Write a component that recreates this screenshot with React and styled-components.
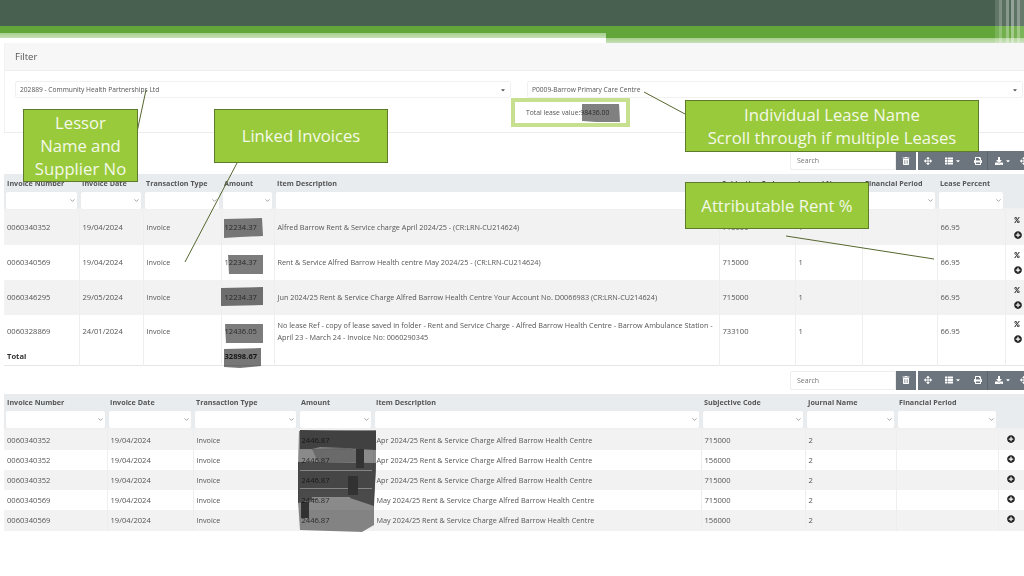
import React from 'react'
import styled, { createGlobalStyle } from 'styled-components'
import { ChevronDown } from 'lucide-react'
import { FaTrashAlt, FaArrowsAlt, FaThList, FaPrint, FaDownload, FaPlusCircle, FaPercent, FaCaretDown } from 'react-icons/fa'

const GlobalStyle = createGlobalStyle`
  html, body { margin: 0; padding: 0; background: #fff; }
  body { font-family: "Open Sans", "Liberation Sans", sans-serif; color: #555; }
`;

const Page = styled.div`
  position: relative;
  width: 1024px;
  height: 576px;
  overflow: hidden;
  background: #fff;
`;

const Banner = styled.div`
  position: relative;
  height: 43px;
`;

const DarkBand = styled.div`
  height: 26px;
  background: #47604f;
`;

const Ribbons = styled.div`
  display: flex;
  height: 17px;
`;

const Ribbon = styled.div`
  width: ${(props) => props.$width};
  background: linear-gradient(
    to bottom,
    #62a639 0,
    #62a639 ${(props) => props.$green}px,
    #a8cf8f ${(props) => props.$green}px,
    #c6dfb6 ${(props) => props.$green + 5}px,
    ${(props) => props.$after} ${(props) => props.$green + 5}px
  );
`;

const Stripes = styled.div`
  position: absolute;
  top: 0;
  right: 0;
  width: 31px;
  height: 43px;
  background: linear-gradient(
    to right,
    transparent 0 2px,
    rgba(255,255,255,.14) 2px 6px,
    rgba(255,255,255,.3) 6px 9px,
    rgba(255,255,255,.1) 9px 13px,
    rgba(255,255,255,.36) 13px 16px,
    rgba(255,255,255,.06) 16px 18px,
    rgba(255,255,255,.42) 18px 21px,
    rgba(255,255,255,.12) 21px 24px,
    rgba(255,255,255,.38) 24px 27px,
    rgba(255,255,255,.16) 27px 31px
  );
`;

const Card = styled.section`
  margin-left: 4px;
  height: 90px;
  box-sizing: border-box;
  border-bottom: 1px solid #ececec;
  border-left: 1px solid #f2f2f2;
`;

const CardHeader = styled.div`
  height: 28px;
  box-sizing: border-box;
  padding-left: 10px;
  display: flex;
  align-items: center;
  background: #f7f7f7;
  border-bottom: 1px solid #ededed;
  font-size: 9.5px;
  color: #555;
`;

const CardBody = styled.div`
  display: grid;
  grid-template-columns: 496px 496px;
  column-gap: 16px;
  padding: 10px 0 0 10px;
`;

const FilterColumn = styled.div`
  display: flex;
  flex-direction: column;
  align-items: flex-start;
`;

const SelectBox = styled.div`
  width: 100%;
  height: 17px;
  box-sizing: border-box;
  padding: 0 4px;
  display: flex;
  align-items: center;
  justify-content: space-between;
  border: 1px solid #f1f1f1;
  border-radius: 2px;
  font-size: 6.65px;
  color: #555;
  svg { color: #555; }
`;

const TotalBox = styled.div`
  margin-left: -16px;
  width: 119px;
  height: 29px;
  box-sizing: border-box;
  padding-left: 11px;
  display: flex;
  align-items: center;
  border: 4px solid #c6e08f;
  background: #fff;
  font-size: 6.8px;
  color: #555;
`;

const Toolbar = styled.div`
  display: flex;
  height: 19px;
  padding-left: 790px;
  margin: ${(props) => props.$top}px 0 4px;
`;

const SearchBox = styled.div`
  width: 106px;
  flex-shrink: 0;
  box-sizing: border-box;
  padding-left: 6px;
  display: flex;
  align-items: center;
  border: 1px solid #eeeeee;
  border-radius: 2px 0 0 2px;
  font-size: 7px;
  color: #777;
`;

const ClearButton = styled.div`
  width: 20px;
  flex-shrink: 0;
  display: flex;
  align-items: center;
  justify-content: center;
  background: #6c757d;
  color: #fff;
  font-size: 8px;
`;

const ButtonGroup = styled.div`
  margin-left: 2px;
  display: flex;
  align-items: center;
  flex-shrink: 0;
  background: #6c757d;
  color: #fff;
  font-size: 8px;
`;

const ToolButton = styled.div`
  width: ${(props) => props.$width}px;
  height: 100%;
  flex-shrink: 0;
  display: flex;
  align-items: center;
  justify-content: center;
  gap: 2px;
  border-left: ${(props) => (props.$divided ? '1px solid #5b646b' : 'none')};
  box-sizing: border-box;
  svg + svg { font-size: 6px; }
`;

const TableWrap = styled.div`
  margin-left: 4px;
`;

const Grid = styled.table`
  width: 1020px;
  table-layout: fixed;
  border-collapse: collapse;
  font-size: 7.6px;
  color: #555;
`;

const HeadRow = styled.tr`
  height: 16px;
  background: #e9ecef;
`;

const HeadCell = styled.th`
  padding: 1px 3px 0;
  text-align: left;
  font-size: 7.2px;
  font-weight: 700;
  color: #555;
  white-space: nowrap;
  overflow: hidden;
`;

const FilterRow = styled.tr`
  height: 20px;
  background: linear-gradient(to bottom, #e9ecef 0 18px, #f0f0f0 18px);
`;

const FilterCell = styled.td`
  padding: 1px 2px;
`;

const FilterInput = styled.div`
  height: 17px;
  box-sizing: border-box;
  padding-right: 1px;
  display: flex;
  align-items: center;
  justify-content: flex-end;
  background: #fff;
  border-radius: 2px;
  color: #666;
`;

const Row = styled.tr`
  height: ${(props) => props.$height}px;
  background: ${(props) => (props.$striped ? '#f2f2f2' : '#fff')};
  border-bottom: ${(props) => (props.$closed ? '1px solid #e6e6e6' : 'none')};
  td { padding-top: ${(props) => props.$lift || 0}px; }
`;

const Cell = styled.td`
  padding: 0 3px;
  border-left: 1px solid #eeeeee;
  line-height: 11.6px;
  font-size: ${(props) => (props.$prose ? '7.28px' : 'inherit')};
  font-weight: ${(props) => (props.$bold ? 700 : 400)};
  color: ${(props) => (props.$bold ? '#333' : '#555')};
  &:first-child { border-left: none; }
`;

const ActionCell = styled(Cell)`
  padding: 0 0 0 8px;
  color: #222;
`;

const ActionStack = styled.div`
  display: flex;
  flex-direction: column;
  align-items: flex-start;
  gap: 8px;
  font-size: 8px;
  svg { display: block; }
  svg:first-child { width: 6px; height: 6px; color: #333; }
`;

const Callout = styled.div`
  position: absolute;
  left: ${(props) => props.$x}px;
  top: ${(props) => props.$y}px;
  width: ${(props) => props.$w}px;
  height: ${(props) => props.$h}px;
  box-sizing: border-box;
  padding-bottom: 1px;
  display: flex;
  align-items: center;
  justify-content: center;
  text-align: center;
  background: #99ca3c;
  border: 1px solid #5d7b2b;
  color: #f4f8e8;
  font-size: 16.7px;
  line-height: 23px;
  white-space: nowrap;
`;

const Marks = styled.svg`
  position: absolute;
  left: 0;
  top: 0;
  pointer-events: none;
  mix-blend-mode: multiply;
`;

const Lines = styled.svg`
  position: absolute;
  left: 0;
  top: 0;
  pointer-events: none;
`;

const proseColumns = [2, 4];

const leaseColumns = [75, 64, 78, 53, 445, 76, 67, 75, 68, 19];
const leaseHeads = ['Invoice Number', 'Invoice Date', 'Transaction Type', 'Amount', 'Item Description', 'Subjective Code', 'Journal Name', 'Financial Period', 'Lease Percent'];
const leaseRows = [
  ['0060340352', '19/04/2024', 'Invoice', '12234.37', 'Alfred Barrow Rent & Service charge April 2024/25 - (CR:LRN-CU214624)', '715000', '1', '', '66.95'],
  ['0060340569', '19/04/2024', 'Invoice', '12234.37', 'Rent & Service Alfred Barrow Health centre May 2024/25 - (CR:LRN-CU214624)', '715000', '1', '', '66.95'],
  ['0060346295', '29/05/2024', 'Invoice', '12234.37', 'Jun 2024/25 Rent & Service Charge Alfred Barrow Health Centre Your Account No. D0066983 (CR:LRN-CU214624)', '715000', '1', '', '66.95'],
  ['0060328869', '24/01/2024', 'Invoice', '12436.05', 'No lease Ref - copy of lease saved in folder - Rent and Service Charge - Alfred Barrow Health Centre - Barrow Ambulance Station - April 23 - March 24 - Invoice No: 0060290345', '733100', '1', '', '66.95'],
];
const leaseHeights = [35, 35, 35, 34];

const lineColumns = [103, 86, 105, 75, 328, 104, 91, 102, 26];
const lineHeads = ['Invoice Number', 'Invoice Date', 'Transaction Type', 'Amount', 'Item Description', 'Subjective Code', 'Journal Name', 'Financial Period'];
const lineRows = [
  ['0060340352', '19/04/2024', 'Invoice', '2446.87', 'Apr 2024/25 Rent & Service Charge Alfred Barrow Health Centre', '715000', '2', ''],
  ['0060340352', '19/04/2024', 'Invoice', '2446.87', 'Apr 2024/25 Rent & Service Charge Alfred Barrow Health Centre', '156000', '2', ''],
  ['0060340352', '19/04/2024', 'Invoice', '2446.87', 'Apr 2024/25 Rent & Service Charge Alfred Barrow Health Centre', '715000', '2', ''],
  ['0060340569', '19/04/2024', 'Invoice', '2446.87', 'May 2024/25 Rent & Service Charge Alfred Barrow Health Centre', '715000', '2', ''],
  ['0060340569', '19/04/2024', 'Invoice', '2446.87', 'May 2024/25 Rent & Service Charge Alfred Barrow Health Centre', '156000', '2', ''],
];
const lineHeights = [20, 20, 20, 20, 21];

function TableTools({ top }) {
  return (
    <Toolbar $top={top}>
      <SearchBox>Search</SearchBox>
      <ClearButton><FaTrashAlt /></ClearButton>
      <ButtonGroup>
        <ToolButton $width={20}><FaArrowsAlt /></ToolButton>
        <ToolButton $width={30}><FaThList /><FaCaretDown /></ToolButton>
        <ToolButton $width={19}><FaPrint /></ToolButton>
        <ToolButton $width={30} $divided><FaDownload /><FaCaretDown /></ToolButton>
        <ToolButton $width={14}><FaArrowsAlt /></ToolButton>
      </ButtonGroup>
    </Toolbar>
  );
}

function Columns({ widths }) {
  return (
    <colgroup>
      {widths.map((w, i) => <col key={i} width={w} />)}
    </colgroup>
  );
}

function TableHead({ heads }) {
  return (
    <thead>
      <HeadRow>
        {heads.map((h) => <HeadCell key={h}>{h}</HeadCell>)}
        <HeadCell />
      </HeadRow>
      <FilterRow>
        {heads.map((h) => (
          <FilterCell key={h}>
            <FilterInput><ChevronDown size={7} /></FilterInput>
          </FilterCell>
        ))}
        <FilterCell />
      </FilterRow>
    </thead>
  );
}

function DataCells({ row }) {
  return row.map((value, c) => (
    <Cell key={c} $prose={proseColumns.includes(c)}>{value}</Cell>
  ));
}

function App() {
  return (
    <Page>
      <GlobalStyle />
      <Banner>
        <DarkBand />
        <Ribbons>
          <Ribbon $width="606px" $green={7} $after="#fff" />
          <Ribbon $width="418px" $green={12} $after="#f7f7f7" />
        </Ribbons>
        <Stripes />
      </Banner>

      <Card>
        <CardHeader>Filter</CardHeader>
        <CardBody>
          <FilterColumn>
            <SelectBox>202889 - Community Health Partnerships Ltd<FaCaretDown size={6} /></SelectBox>
          </FilterColumn>
          <FilterColumn>
            <SelectBox>P0009-Barrow Primary Care Centre<FaCaretDown size={6} /></SelectBox>
            <TotalBox>Total lease value:98436.00</TotalBox>
          </FilterColumn>
        </CardBody>
      </Card>

      <TableTools top={18} />
      <TableWrap>
        <Grid>
          <Columns widths={leaseColumns} />
          <TableHead heads={leaseHeads} />
          <tbody>
            {leaseRows.map((row, r) => (
              <Row key={r} $height={leaseHeights[r]} $striped={r % 2 === 0}>
                <DataCells row={row} />
                <ActionCell>
                  <ActionStack><FaPercent /><FaPlusCircle /></ActionStack>
                </ActionCell>
              </Row>
            ))}
            <Row $height={16} $closed>
              <Cell $bold>Total</Cell>
              <Cell />
              <Cell />
              <Cell $bold>32898.67</Cell>
              <Cell />
              <Cell />
              <Cell />
              <Cell />
              <Cell />
              <Cell />
            </Row>
          </tbody>
        </Grid>
      </TableWrap>

      <TableTools top={5} />
      <TableWrap>
        <Grid>
          <Columns widths={lineColumns} />
          <TableHead heads={lineHeads} />
          <tbody>
            {lineRows.map((row, r) => (
              <Row key={r} $height={lineHeights[r]} $striped={r % 2 === 0} $lift={2}>
                <DataCells row={row} />
                <ActionCell><FaPlusCircle size={8} /></ActionCell>
              </Row>
            ))}
          </tbody>
        </Grid>
      </TableWrap>

      {/* redaction scribbles, drawn over the amounts */}
      <Marks width="1024" height="576">
        <path d="M582 104H619L620 122H596L582 121Z" fill="#808080" />
        <path d="M224 219L262 218L263 236L240 237L224 238Z" fill="#7c7c7c" />
        <path d="M228 255H263V274H229Z" fill="#7c7c7c" />
        <path d="M221 288L263 287V305L221 306Z" fill="#747474" />
        <path d="M225 324H263V343H226Z" fill="#7c7c7c" />
        <path d="M224 349L261 348V366L240 368L224 367Z" fill="#777" />
        <path d="M299 431L376 430V470L374 497V525L362 532L300 530L298 500V470Z" fill="#8a8a8a" />
        <path d="M312 449L345 448L358 450L356 462H318Z" fill="#6a6a6a" />
        <path d="M300 430L376 431V450L358 449L345 448L320 447L312 449L300 449Z" fill="#444" />
        <path d="M298 462L376 463L374 506L350 498L322 498L298 503Z" fill="#4a4a4a" />
        <path d="M300 470H372V471H300Z M300 488H372V489H300Z M312 497H350V499H312Z" fill="#8c8c8c" />
        <path d="M356 449H364V468H356Z" fill="#333" />
        <path d="M348 476H358V495H348Z" fill="#333" />
        <path d="M301 502H309V518H301Z" fill="#333" />
      </Marks>

      <Lines width="1024" height="576">
        <g stroke="#56672f" strokeWidth="1" fill="none">
          <line x1="146" y1="90" x2="137" y2="132" />
          <line x1="237" y1="163" x2="185" y2="262" />
          <line x1="644" y1="92" x2="685" y2="114" />
          <line x1="786" y1="236" x2="934" y2="259" />
        </g>
      </Lines>

      <Callout $x={23} $y={109} $w={115} $h={73}>Lessor<br />Name and<br />Supplier No</Callout>
      <Callout $x={214} $y={109} $w={174} $h={54}>Linked Invoices</Callout>
      <Callout $x={685} $y={100} $w={294} $h={52}>Individual Lease Name<br />Scroll through if multiple Leases</Callout>
      <Callout $x={685} $y={182} $w={184} $h={47}>Attributable Rent %</Callout>
    </Page>
  );
}

export default App
